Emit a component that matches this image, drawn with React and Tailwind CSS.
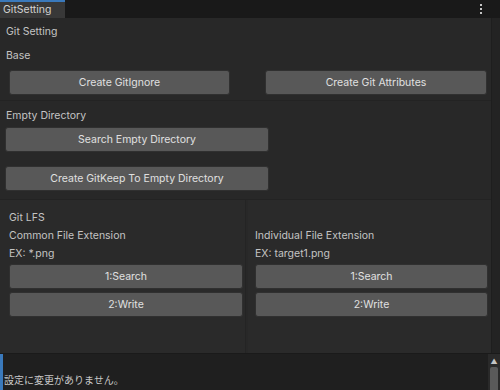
import React from 'react'

const font = { fontFamily: 'Inter, "Noto Sans CJK JP", sans-serif' }

function Btn({ children, className = '' }) {
  return (
    <div
      className={`flex items-center justify-center h-[25px] rounded-[3px] bg-[#585858] border border-[#303030] text-[10.5px] text-[#e0e0e0] ${className}`}
    >
      {children}
    </div>
  )
}

function Label({ children, className = '' }) {
  return <div className={`text-[10.5px] flex items-center ${className}`}>{children}</div>
}

export default function App() {
  return (
    <div className="w-[500px] h-[390px] bg-[#282828] flex flex-col overflow-hidden text-[#c4c4c4]" style={font}>
      {/* tab bar */}
      <div className="h-[18px] shrink-0 bg-[#191919] flex items-stretch">
        <div className="w-[65px] bg-[#383838] border-t-2 border-[#3a79bb] flex items-center pl-[3px] text-[10.5px] text-[#d2d2d2]">
          GitSetting
        </div>
        <div className="flex-1" />
        <div className="w-[18px] mr-[10px] flex flex-col items-center justify-center gap-[2px]">
          <span className="w-[2px] h-[2px] bg-[#c4c4c4]" />
          <span className="w-[2px] h-[2px] bg-[#c4c4c4]" />
          <span className="w-[2px] h-[2px] bg-[#c4c4c4]" />
        </div>
      </div>

      <div className="flex-1 flex">
        <div className="flex-1 flex flex-col">
          <div className="pt-[2px]">
            <Label className="h-[24px] pl-[6px]">Git Setting</Label>
            <Label className="h-[24px] pl-[6px]">Base</Label>
            <div className="flex justify-between pl-[9px] pr-[4px] mt-[2px]">
              <Btn className="w-[221px]">Create GitIgnore</Btn>
              <Btn className="w-[222px]">Create Git Attributes</Btn>
            </div>
          </div>

          <div className="mt-[5px] border-t border-[#232323] pt-[4px]">
            <Label className="h-[22px] pl-[6px]">Empty Directory</Label>
            <div className="flex flex-col gap-[14px] pl-[5px]">
              <Btn className="w-[264px]">Search Empty Directory</Btn>
              <Btn className="w-[264px]">Create GitKeep To Empty Directory</Btn>
            </div>
          </div>

          <div className="mt-[8px] border-t border-[#232323] flex flex-1 gap-[2px]">
            <div className="w-[246px] bg-[#2a2a2a] border-r border-[#242424] pl-[9px] pr-[2px] pt-[9px]">
              <Label className="h-[18px]">Git LFS</Label>
              <Label className="h-[18px]">Common File Extension</Label>
              <Label className="h-[18px]">EX: *.png</Label>
              <div className="flex flex-col gap-[3px] mt-[1px]">
                <Btn>1:Search</Btn>
                <Btn>2:Write</Btn>
              </div>
            </div>
            <div className="flex-1 bg-[#2a2a2a] pl-[7px] pr-[3px] pt-[27px]">
              <Label className="h-[18px]">Individual File Extension</Label>
              <Label className="h-[18px]">EX: target1.png</Label>
              <div className="flex flex-col gap-[3px] mt-[1px]">
                <Btn>1:Search</Btn>
                <Btn>2:Write</Btn>
              </div>
            </div>
          </div>
        </div>
        <div className="w-[9px] bg-[#232323] border-l border-[#1e1e1e]" />
      </div>

      {/* console */}
      <div className="h-[37px] shrink-0 bg-[#1f1f1f] flex border-t border-[#1a1a1a]">
        <div className="w-[3px] bg-[#3a79bb]" />
        <div className="flex-1 flex items-end pb-[2px] pl-[1px] text-[10px] text-[#c8c8c8]">設定に変更がありません。</div>
        <div className="w-[12px] bg-[#2a2a2a] flex flex-col items-center pt-[4px]">
          <span className="text-[7px] text-[#c4c4c4] leading-none">▲</span>
          <span className="mt-[2px] w-[8px] flex-1 bg-[#5a5a5a] rounded-t-[2px]" />
        </div>
      </div>
    </div>
  )
}
